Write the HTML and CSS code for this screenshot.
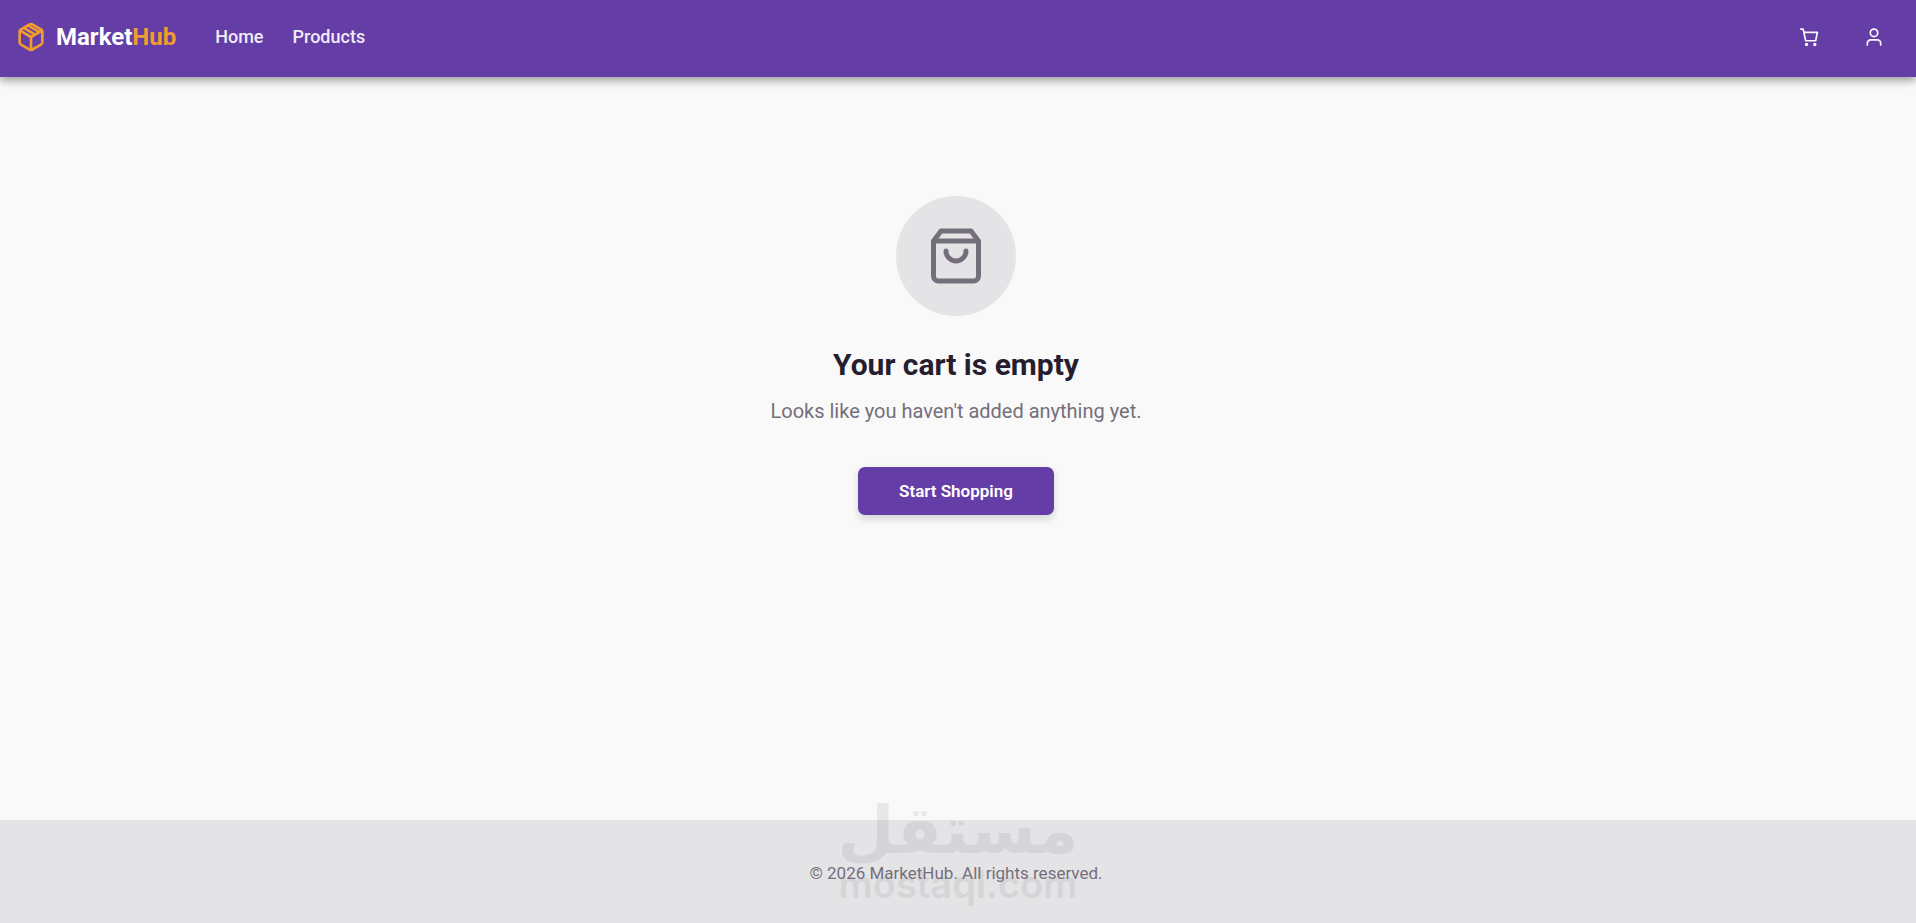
FILE: index.html
```html
<!DOCTYPE html>
<html lang="en">
<head>
    <meta charset="UTF-8">
    <meta name="viewport" content="width=device-width, initial-scale=1.0">
    <title>MarketHub - Cart</title>
    <link rel="stylesheet" href="styles.css">
</head>
<body>
    <header class="navbar">
        <a href="#" class="brand">
            <svg class="brand-icon" viewBox="0 0 24 24" aria-hidden="true">
                <path d="M11 2.600a2 2 0 0 1 2 0l6.500 3.700a2 2 0 0 1 1 1.700v8a2 2 0 0 1-1 1.700l-6.500 3.700a2 2 0 0 1-2 0l-6.500-3.700a2 2 0 0 1-1-1.700V8a2 2 0 0 1 1-1.700z"/>
                <path d="M3.800 7.200 12 12 20.200 7.200M12 12v9.500M6.600 5.200l7.800 4.600M10 3.400l7.800 4.600"/>
            </svg>
            <span class="brand-name">Market<span class="brand-accent">Hub</span></span>
        </a>
        <nav class="nav-links">
            <a href="#">Home</a>
            <a href="#">Products</a>
        </nav>
        <div class="nav-actions">
            <button type="button" class="icon-button" aria-label="Cart">
                <svg viewBox="0 0 24 24" aria-hidden="true">
                    <path d="M2 2.500h3l3 14h12l2-10H6"/>
                    <circle class="wheel" cx="9" cy="21" r="2"/>
                    <circle class="wheel" cx="19" cy="21" r="2"/>
                </svg>
            </button>
            <button type="button" class="icon-button" aria-label="Account">
                <svg viewBox="0 0 24 24" aria-hidden="true">
                    <circle cx="12" cy="7" r="4.500"/>
                    <path d="M4 21.500v-2a4 4 0 0 1 4-4h8a4 4 0 0 1 4 4v2"/>
                </svg>
            </button>
        </div>
    </header>

    <main class="empty-cart">
        <div class="empty-icon">
            <svg viewBox="0 0 24 24" aria-hidden="true">
                <path d="M6 2 3 6v14a2 2 0 0 0 2 2h14a2 2 0 0 0 2-2V6l-3-4zM3 6h18M16 10a4 4 0 0 1-8 0"/>
            </svg>
        </div>
        <h1>Your cart is empty</h1>
        <p>Looks like you haven't added anything yet.</p>
        <button type="button" class="shop-button">Start Shopping</button>
    </main>

    <footer class="footer">
        <p>© 2026 MarketHub. All rights reserved.</p>
        <div class="watermark">
            <span class="watermark-ar" lang="ar" dir="rtl">مستقل</span>
            <span class="watermark-en">mostaql.com</span>
        </div>
    </footer>
</body>
</html>
```

FILE: styles.css
```css
* {
    box-sizing: border-box;
}
body {
    margin: 0;
    min-height: 100vh;
    display: flex;
    flex-direction: column;
    font-family: Roboto, sans-serif;
    font-size: 18px;
    line-height: 28px;
    background-color: #f9f9f9;
    color: #261e2e;
}
h1, p {
    margin: 0;
}
svg {
    display: block;
    fill: none;
    stroke: currentColor;
    stroke-width: 2;
    stroke-linecap: round;
    stroke-linejoin: round;
}
.navbar {
    position: relative;
    display: flex;
    align-items: center;
    height: 77px;
    padding: 0 20px 3px 15px;
    background-color: #653da7;
    color: white;
    box-shadow: 0 4px 8px rgba(0, 0, 0, 0.35);
}
.brand {
    display: flex;
    align-items: center;
    gap: 9px;
    color: white;
    text-decoration: none;
}
.brand-icon {
    width: 32px;
    height: 32px;
    color: #f09c2e;
}
.brand-name {
    font-size: 24px;
    font-weight: 700;
    line-height: 30px;
}
.brand-accent {
    color: #f09c2e;
}
.nav-links {
    display: flex;
    gap: 29px;
    margin-left: 39px;
}
.nav-links a {
    color: #f0ecf6;
    font-weight: 500;
    line-height: 30px;
    text-decoration: none;
}
.nav-actions {
    display: flex;
    gap: 21px;
    margin-left: auto;
}
.icon-button {
    padding: 12px;
    border: none;
    background: none;
    color: #f9f9f9;
    cursor: pointer;
}
.icon-button svg {
    width: 20px;
    height: 20px;
}
.wheel {
    fill: currentColor;
    stroke: none;
}
.empty-cart {
    flex: 1;
    display: flex;
    flex-direction: column;
    align-items: center;
    padding: 119px 24px 80px 20px;
    text-align: center;
}
.empty-icon {
    display: flex;
    align-items: center;
    justify-content: center;
    width: 120px;
    height: 120px;
    margin-bottom: 30px;
    border-radius: 50%;
    background-color: #e4e4e6;
    color: #756f7c;
}
.empty-icon svg {
    width: 60px;
    height: 60px;
}
.empty-cart h1 {
    margin-bottom: 12px;
    font-size: 30px;
    line-height: 38px;
}
.empty-cart p {
    margin-bottom: 41px;
    font-size: 20px;
    line-height: 30px;
    color: #756f7c;
}
.shop-button {
    height: 48px;
    padding: 0 41px;
    border: none;
    border-radius: 7px;
    background-color: #653da7;
    color: white;
    font-family: inherit;
    font-size: 17px;
    font-weight: 600;
    box-shadow: 0 4px 8px rgba(0, 0, 0, 0.15);
    cursor: pointer;
}
.footer {
    position: relative;
    padding: 39px 24px 36px 20px;
    background-color: #e4e4e6;
    color: #756f7c;
    font-size: 17px;
    text-align: center;
}
.watermark {
    position: absolute;
    bottom: 21px;
    left: 50%;
    display: flex;
    flex-direction: column;
    align-items: center;
    transform: translateX(-50%);
    color: #77777c;
    opacity: 0.13;
    font-weight: 700;
    pointer-events: none;
}
.watermark-ar {
    font-family: "DejaVu Sans", sans-serif;
    font-size: 66px;
    line-height: 70px;
}
.watermark-en {
    font-family: Inter, sans-serif;
    font-size: 38px;
    font-weight: 600;
    line-height: 36px;
}
```
